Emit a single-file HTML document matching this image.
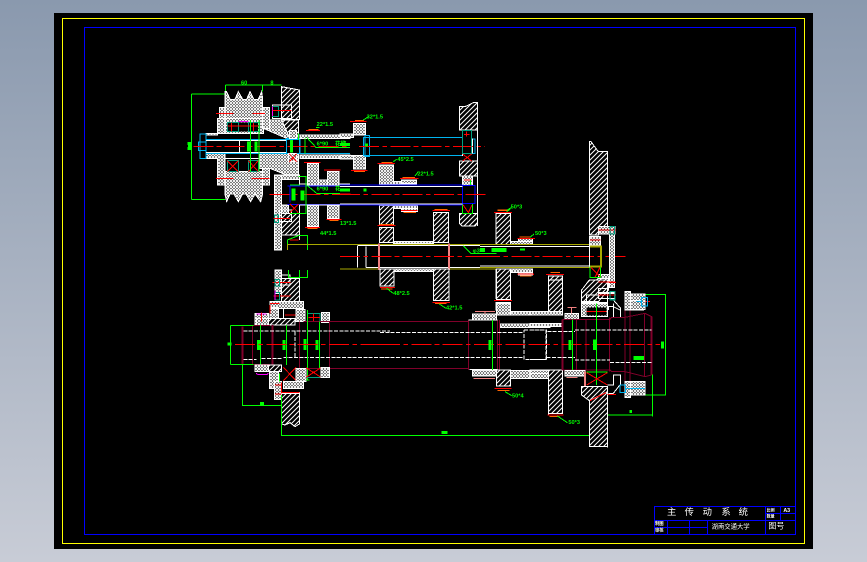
<!DOCTYPE html>
<html><head><meta charset="utf-8"><title>主传动系统</title>
<style>
html,body{margin:0;padding:0;width:867px;height:562px;overflow:hidden;background:linear-gradient(#8a99ae,#c8ccd6)}
svg{position:absolute;left:0;top:0;display:block}
text{font-family:"Liberation Sans","Noto Sans CJK SC",sans-serif}
.w{stroke:#fff;stroke-width:3;fill:none}
.d{stroke:#fff;stroke-width:3;fill:url(#dense)}
.h{stroke:#fff;stroke-width:3;fill:url(#diag)}
.r{stroke:#f00;stroke-width:3;fill:none}
.c{stroke:#f00;stroke-width:3;fill:none;stroke-dasharray:60 10 14 10}
.o{stroke:#f60;stroke-width:3;fill:none}
.g{stroke:#0f0;stroke-width:3;fill:none}
.t{stroke:#00b4f0;stroke-width:3;fill:none}
.b{stroke:#0000ff;stroke-width:3;fill:none}
.y{stroke:#a8a800;stroke-width:3;fill:none}
.m{stroke:#80002a;stroke-width:3;fill:none}
.mm{stroke:#80002a;stroke-width:6;fill:none}
.p{stroke:#f08080;stroke-width:6;fill:none}
.k{stroke:#f0f;stroke-width:3;fill:none}
.e{stroke:#00a080;stroke-width:3;fill:none}
.wd{stroke:#fff;stroke-width:3;fill:none;stroke-dasharray:12 4}
.l{fill:#0f0;font-size:17px;font-weight:bold}
</style></head><body>
<svg width="867" height="562" viewBox="0 0 867 562" xmlns="http://www.w3.org/2000/svg" shape-rendering="crispEdges">
<defs>
<pattern id="dense" width="9" height="9" patternUnits="userSpaceOnUse"><rect width="9" height="9" fill="#000" shape-rendering="auto"/><path d="M-3 3L3 -3M0 9L9 0M6 12L12 6M-3 6L3 12M0 0L9 9M6 -3L12 3" stroke="#fff" stroke-width="3" fill="none" shape-rendering="auto"/></pattern>
<pattern id="diag" width="15" height="15" patternUnits="userSpaceOnUse"><rect width="15" height="15" fill="#000" shape-rendering="auto"/><path d="M-3 3L3 -3M0 15L15 0M12 18L18 12" stroke="#fff" stroke-width="3" shape-rendering="auto"/></pattern>
</defs>
<rect x="54" y="13" width="759" height="536" fill="#000"/>
<rect x="62.5" y="18.5" width="742" height="525" fill="none" stroke="#ff0" stroke-width="1"/>
<rect x="84.5" y="27.5" width="711" height="507" fill="none" stroke="#00f" stroke-width="1"/>

<!-- Region A: pulley -->
<g transform="translate(180,70) scale(.33333)">
<path class="g" d="M35 72V388M35 72H135M35 388H135M137 45H305M137 45V65M248 45V65"/>
<path class="h" d="M305 50L358 60V148H305Z"/>
<path class="d" d="M135 65H140L150 88H165L175 65L188 88H200L210 65L222 88H235L245 65L248 88V145H135V88Z"/>
<path class="d" d="M135 305H248V372L242 395L225 372L212 395L198 372H188L175 395L162 372H150L140 395L135 372Z"/>
<path class="d" d="M112 145H135V190H78V195H112Z"/>
<path class="d" d="M78 250H135V345H112V265H78Z"/>
<path class="d" d="M135 145H250V190H135Z"/>
<rect x="142" y="158" width="92" height="26" fill="#000"/>
<path class="e" d="M142 158H175V184H142ZM205 158H238V184H205Z"/>
<path class="r" d="M155 158V184M220 158V184M142 168H238"/>
<path class="k" d="M175 155H205M175 300H205"/>
<rect x="135" y="265" width="113" height="40" fill="#000" stroke="#fff" stroke-width="3"/>
<path class="e" d="M142 272H175V305H142ZM205 272H235V305H205Z"/>
<path class="r" d="M142 272L175 305M175 272L142 305M205 272L235 305M235 272L205 305"/>
<path class="d" d="M118 112H135V145H118ZM248 112H268V175H248ZM248 285H268V345H248Z"/>
<path class="d" d="M268 150H355V205H320L250 175H268Z"/>
<path class="d" d="M240 250H355V315H320L270 295H240Z"/>
<path class="h" d="M305 150H355V195H325Z"/>
<path class="w" d="M278 105H335V145H278Z"/>
<path class="e" d="M278 110H296V140H278Z"/>
<path class="k" d="M277 110V138M325 250V275"/>
<path class="r" d="M278 122H335M108 130H160M218 130H255M108 325H160M215 325H268"/>
<rect x="78" y="205" width="282" height="45" fill="#000"/>
<path class="t" d="M60 192H78V265H60ZM55 216H78V242H55ZM78 208H360V250H78ZM320 205H358V250H320ZM355 195H380M355 205H510M355 250H510"/>
<path class="w" d="M78 212H318M78 247H318M360 198H510M360 255H510M360 265H510M160 212H178V248H160"/>
<path class="d" d="M360 195H510V205H360ZM360 255H510V266H360Z"/>
<path class="c" d="M40 229H510"/>
<path class="g" d="M212 150V305M237 150V305M375 205V250M355 190V210"/>
<path class="g" d="M205 215V245M228 215V245M335 210V248M22 220H34M22 235H34M28 220V235" style="stroke-width:9"/>
<path class="d" d="M328 182H350V205H328ZM325 250H350V275H325Z"/>
<path class="r" d="M328 252L350 275M350 252L328 275"/>
<path class="o" d="M385 178H415"/>
<path class="r" d="M378 182H420M372 278H422"/>
<path class="g" d="M380 202L408 232H510M408 172H418"/>
<text class="l" x="183" y="44">60</text><text class="l" x="271" y="44">8</text>
<text class="l" x="410" y="168">22*1.5</text><text class="l" x="410" y="227">6*90</text><text class="l" x="465" y="227">花键</text>
<!-- lower left -->
<path class="d" d="M283 315H305V540H283Z"/>
<path class="h" d="M305 430H358V495H305Z"/>
<path class="d" d="M305 315H358V328H305ZM305 405H325V430H305Z"/>
<path class="w" d="M358 315V510M298 420H335V455H298Z"/>
<path class="e" d="M283 435H296V458H283Z"/>
<path class="r" d="M280 445H330M330 510H355"/>
<rect x="322" y="345" width="190" height="60" fill="#000"/>
<path class="b" d="M322 348H510M322 403H510M330 350V398"/>
<path class="w" d="M358 342H510M358 405H510"/>
<path class="c" d="M268 373H510"/>
<path class="g" d="M355 320H378V430H330M330 345H360M380 345L410 370H510M322 540V510L355 497H382V540"/>
<path class="g" style="stroke-width:12" d="M340 355V392M367 362V392"/>
<path class="r" d="M330 402L355 428M355 402L330 428"/>
<path class="d" d="M382 280H415V345H382Z"/>
<path class="d" d="M382 405H415V470H382Z"/>
<path class="d" d="M442 305H477V345H442ZM415 330H442V345H415Z"/>
<path class="d" d="M442 405H477V445H442Z"/>
<path class="r" d="M375 472H420M432 300H482M440 448H485"/>
<path class="o" d="M382 476H412M448 451H475"/>
<text class="l" x="420" y="495">44*1.5</text><text class="l" x="480" y="465">13*1.5</text>
<text class="l" x="410" y="362">6*90</text><text class="l" x="465" y="362">花键</text>
<path class="y" d="M322 523H510M322 523V540"/>
</g>

<!-- Region B -->
<g transform="translate(340,90) scale(.33333)">
<path class="d" d="M40 100H77V135H40ZM40 197H77V237H40ZM0 132H40V142H0ZM0 197H40V207H0Z"/>
<path class="r" d="M30 95H80M33 241H82"/><path class="o" d="M45 91H72M42 244H75"/>
<path class="g" d="M70 90L85 80"/>
<text class="l" x="80" y="86">32*1.5</text>
<path class="t" d="M70 142H368V197H70ZM75 136H89V200H75ZM395 147H405V190H395Z"/>
<path class="w" d="M368 122V198M398 145V190"/>
<path class="c" d="M57 169H435"/>
<path class="g" style="stroke-width:9" d="M0 163H30M80 160V170"/>
<path class="h" d="M358 50L375 50L400 38H412V120H358Z"/>
<path class="h" d="M358 213H412V258H358Z"/>
<path class="h" d="M358 370H412V400L405 408H366L358 400Z"/>
<path class="w" d="M412 38V408"/>
<path class="e" d="M368 122H395V190H368Z"/>
<path class="r" d="M380 125V140M372 133H388M368 192L395 213M395 192L368 213"/>
<path class="d" d="M368 258H398V285H368Z"/>
<path class="r" d="M372 270H395"/>
<path class="g" d="M368 342V370H398V342M392 270V285"/>
<path class="r" d="M370 345L385 368L396 345"/>
<!-- gear middle -->
<path class="d" d="M118 225H160V283H118Z"/>
<path class="d" d="M160 275H230V283H160Z"/>
<path class="d" d="M185 270H230V280H185Z"/>
<path class="h" d="M118 347H160V405H118Z"/>
<path class="h" d="M118 412H160V458H118Z"/>
<path class="d" d="M160 347H232V356H160ZM185 356H232V364H185Z"/>
<path class="h" d="M280 367H325V458H280Z"/>
<path class="d" d="M160 455H280V461H160Z"/>
<path class="h" d="M470 373H510V461H470Z"/>
<path class="r" d="M113 221H165M180 266H235M183 362H233M277 362H330M112 407H166M462 367H510"/>
<path class="o" d="M125 217H158M188 262H225M190 367H228M283 358H322M118 403H160M472 360H505"/>
<path class="g" d="M160 215L170 208M225 258L235 245M500 365L510 358"/>
<text class="l" x="172" y="213">45*2.5</text><text class="l" x="232" y="256">22*1.5</text>
<rect x="0" y="284" width="368" height="62" fill="#000"/>
<path class="b" d="M0 285H368M0 345H368M368 287H405V340H368Z"/>
<path class="w" d="M0 289H368M0 342H368"/>
<path class="c" d="M0 313H445"/>
<path class="g" style="stroke-width:9" d="M0 300H30M75 295V305"/><path class="r" d="M0 312H32"/>
<!-- yellow shaft -->
<path class="y" d="M0 463H510M0 537H510"/>
<path class="w" d="M52 468V532M78 470V532M52 467H510M78 532H510"/>
<path class="p" d="M117 460V540M327 460V540"/>
<path class="c" d="M0 499H510"/>
<path class="g" d="M370 468L393 490H510"/>
<text class="l" x="398" y="488">φ30</text><text class="l" x="452" y="488">花键</text>
</g>

<!-- Region C -->
<g transform="translate(480,130) scale(.33333)">
<path class="h" d="M48 250H92V345H48Z"/>
<path class="d" d="M92 335H158V345H92ZM115 325H158V335H115Z"/>
<path class="r" d="M42 247H96M112 325H165"/><path class="o" d="M52 242H82M118 321H150"/>
<path class="g" d="M82 240L95 232M150 322L162 312"/>
<text class="l" x="92" y="236">50*3</text><text class="l" x="165" y="315">50*3</text>
<rect x="0" y="344" width="330" height="70" fill="#000"/>
<path class="y" d="M0 343H330M0 413H330"/>
<path class="w" d="M0 349H330M0 408H330"/>
<path class="g" d="M0 370H50"/><path class="g" style="stroke-width:12" d="M0 360H15M35 360H80"/>
<path class="g" style="stroke-width:6" d="M120 358H135"/>
<path class="c" d="M0 379H440"/>
<path class="h" d="M48 418H92V505H48Z"/>
<path class="h" d="M48 517H92V540H48Z"/>
<path class="d" d="M92 418H158V425H92ZM115 425H158V432H115Z"/>
<path class="h" d="M205 438H248V540H205Z"/>
<path class="r" d="M112 434H162M42 511H96M198 433H252"/>
<path class="o" d="M120 438H155M212 428H240M50 506H90"/>
<path class="h" d="M328 35H333L355 65H382V290H355V315H328Z"/>
<path class="d" d="M355 290H405V312H355Z"/>
<path class="d" d="M388 312H404V472H388Z"/>
<path class="d" d="M355 433H388V445H355Z"/>
<path class="d" d="M328 320H362V345H328Z"/>
<path class="r" d="M330 330H362M355 300H408M355 457H408M355 495H405"/>
<path class="e" d="M390 290H404V312H390ZM390 485H404V508H390Z"/>
<path class="y" style="stroke-width:6" d="M330 350H363V410H330"/>
<path class="w" d="M328 345V412"/>
<path class="g" d="M330 410V442H362V410"/>
<path class="r" d="M332 412L360 440M360 412L345 442"/>
<path class="h" d="M305 490L330 470L355 445H385V480L355 515H305Z"/>
<path class="w" d="M355 488H405V505H355ZM355 515V530H385V540M385 530H400L420 540"/>
<path class="d" d="M308 518H380V535H308Z"/>
<path class="p" d="M315 522V540"/>
<path class="g" d="M350 520V540"/>
<path class="d" d="M436 485H452V540H436ZM452 492H490V540H452Z"/>
<path class="g" d="M490 493H510"/>
<path class="r" d="M452 515H510"/>
<path class="t" d="M486 502H502V528H486Z"/>
</g>

<!-- Region D -->
<g transform="translate(220,270) scale(.33333)">
<path class="d" d="M165 0H185V70H165Z"/>
<path class="h" d="M185 25H238V95H185Z"/>
<path class="w" d="M185 15H210V45H185Z"/>
<path class="r" d="M158 37H212M160 78H212"/>
<path class="e" d="M165 28H178V48H165ZM165 68H178V90H165Z"/>
<path class="k" d="M165 62V90"/>
<path class="g" d="M205 0V22H263V0M238 0V22"/>
<path class="d" d="M150 95H250V115H150ZM150 112H175V145H150Z"/>
<path class="w" d="M190 115H230V150H190Z"/>
<path class="r" d="M195 135H228M150 100H178M150 105V130"/>
<path class="d" d="M228 118H255V155H228Z"/>
<path class="d" d="M305 128H328V157H305Z"/>
<path class="e" d="M262 130H300V155H262Z"/>
<path class="r" d="M265 142H300M280 130V155"/>
<path class="d" d="M105 130H145V165H105Z"/>
<path class="d" d="M110 145H225V165H110Z"/>
<path class="h" d="M145 145H225V165H145Z"/>
<path class="k" d="M110 132H140"/>
<path class="r" d="M125 128V155"/>
<path class="mm" d="M68 170V282M158 165V285"/>
<path class="m" d="M68 166H150M68 284H150M98 165V285M238 155V295M328 155V295M250 155H510M250 295H510"/>
<path class="wd" d="M70 183H510M70 268H110M125 265H185M190 262H510M225 185V262"/>
<path class="g" d="M32 167V283M32 167H100M32 283H100M122 165V285M199 165V285M262 120V330M298 155V295"/>
<path class="g" style="stroke-width:9" d="M115 210V240M192 210V240M255 207V240M291 210V240M22 222H34"/>
<path class="c" d="M45 223H510"/>
<path class="d" d="M105 285H185V305H105Z"/>
<path class="h" d="M145 285H185V305H145Z"/>
<path class="k" d="M108 310L115 314H140L145 310M325 308V315"/>
<path class="d" d="M148 305H175V355H148Z"/>
<path class="d" d="M190 335H250V355H190Z"/>
<path class="d" d="M163 335H185V388H163Z"/>
<path class="h" d="M185 370H238V462L225 470L210 458L195 465L185 462Z"/>
<path class="w" d="M185 367H238V462"/>
<path class="r" d="M185 338V367H238M165 345H185M165 372H185M190 292L228 332M228 292L190 332"/>
<path class="d" d="M228 295H258V335H228Z"/>
<path class="e" d="M258 322H303"/>
<path class="r" d="M258 293L303 322M303 293L258 322"/>
<path class="d" d="M303 292H328V322H303Z"/>
<path class="g" d="M68 283V407H183M185 375V497H510M178 310V335M258 330H268"/>
<path class="g" style="stroke-width:9" d="M120 400H132"/>
</g>

<!-- Region E -->
<g transform="translate(380,250) scale(.33333)">
<path class="h" d="M0 57H42V108H0Z"/>
<path class="d" d="M42 57H160V65H42Z"/>
<path class="h" d="M160 57H207V152H160Z"/>
<path class="h" d="M350 57H392V148H350Z"/>
<path class="d" d="M392 57H458V68H392ZM415 68H458V75H415Z"/>
<path class="r" d="M0 112H45M157 157H210M343 152H395M412 72H462M343 416H395"/>
<path class="o" d="M3 117H38M165 160H200M420 78H455M352 421H388"/>
<path class="g" d="M20 115L40 130M178 162L198 175M375 425L395 437"/>
<text class="l" x="40" y="135">48*2.5</text><text class="l" x="198" y="178">42*1.5</text><text class="l" x="396" y="442">50*4</text>
<path class="d" d="M350 160H392V195H350Z"/>
<path class="d" d="M392 185H510V195H392ZM360 222H510V233H360Z"/>
<path class="w" d="M505 78V183M505 388V495"/>
<path class="m" d="M0 214H265M0 355H265M265 210V360M352 210V360M358 210V360"/>
<path class="wd" d="M0 247H432M0 322H432M432 240H500V328H432V240M505 245H510"/>
<path class="c" d="M0 283H510"/>
<path class="d" d="M277 192H350V210H277ZM277 360H350V378H277Z"/>
<path class="p" d="M315 185V192" style="stroke-width:3"/>
<path class="p" d="M285 185H345M280 385H345" style="stroke-width:3"/>
<path class="w" d="M265 210H352M268 359H352"/>
<path class="h" d="M350 360H392V408H350Z"/>
<path class="d" d="M392 362H510V385H392Z"/>
<path class="g" d="M337 210V360M0 556H510"/>
<path class="g" style="stroke-width:9" d="M330 270V300M185 548H203"/>
</g>

<!-- Region F -->
<g transform="translate(530,280) scale(.33333)">
<path class="h" d="M55 0H98V95H55Z"/>
<path class="d" d="M0 95H98V105H0ZM0 130H98V140H0Z"/>
<path class="d" d="M0 270H98V280H0ZM0 280H55V295H0Z"/>
<path class="h" d="M55 270H98V400H55Z"/>
<path class="r" d="M52 405H100"/><path class="o" d="M58 410H88"/>
<path class="g" d="M82 408L112 428"/>
<text class="l" x="115" y="432">50*3</text>
<path class="d" d="M105 100H145V118H105ZM105 274H165V288H105Z"/>
<path class="p" d="M110 292H142" style="stroke-width:3"/>
<path class="p" d="M112 82H140M125 82V100" style="stroke-width:3"/>
<path class="h" d="M178 0H232V25H205V45H170V65H155V30Z"/>
<path class="d" d="M155 70H232V110H155Z"/>
<rect x="170" y="82" width="60" height="25" fill="#000"/>
<path class="w" d="M155 30V70M232 25V95M250 60L272 85V112H250V70M205 40H255V55H205"/>
<path class="r" d="M205 6H255M205 45H258M170 95H230"/>
<path class="e" d="M240 35H255V60H240Z"/>
<path class="mm" d="M97 118V270M365 110V285"/>
<path class="m" d="M97 118H240L245 112H285L345 100L365 110M97 270H240L245 275H285L345 290L365 285M140 118V270M168 118V270M238 112V275M285 85V305M300 85V305M343 100V290"/>
<path class="wd" d="M0 150H48V238H0M52 155H135M135 150H365M50 232H135M135 240H240M240 247H365"/>
<path class="c" d="M0 193H390"/>
<path class="g" d="M127 118V270M199 70V315M345 44H407V345H345M232 405H367V283M367 405V410M0 466H232M170 276H232"/>
<path class="g" style="stroke-width:9" d="M120 180V210M193 178V210M398 185V205M298 395H306"/>
<path class="g" style="stroke-width:12" d="M310 234H342"/>
<path class="d" d="M105 272H165V288H105Z"/>
<path class="r" d="M170 278L232 315M232 278L170 315"/>
<path class="p" d="M165 275V318" style="stroke-width:6"/>
<path class="h" d="M155 320H232V335L178 362L155 345Z"/>
<path class="h" d="M178 362L232 335V500H178Z"/>
<path class="w" d="M232 315H250V285H272V312L250 340H235M232 335V502M178 362V500H232"/>
<path class="r" d="M180 362L228 338M232 343H258"/>
<path class="d" d="M285 35H302V90H285ZM302 42H345V88H302Z"/>
<path class="w" d="M302 62H330"/>
<path class="t" d="M335 52H352V78H335ZM320 65H338"/>
<path class="d" d="M285 305H302V352H285ZM302 305H345V345H302Z"/>
<path class="w" d="M302 325H345"/>
<path class="r" d="M285 325H345"/>
<path class="t" d="M270 315H287V338H270ZM287 325H345"/>
</g>

<!-- Title block -->
<g transform="translate(640,495) scale(.33333)">
<path class="b" style="fill:#000" d="M43 34H466V118H43Z"/>
<path class="b" d="M43 76H466M377 34V118M422 34V76M377 55H466M83 76V118M148 76V118M202 76V118M43 97H202"/>
<g fill="#fff" font-size="28">
<text x="81" y="60">主</text><text x="134" y="60">传</text><text x="188" y="60">动</text><text x="244" y="60">系</text><text x="296" y="60">统</text>
<text x="215" y="100" font-size="19">湖南交通大学</text>
<text x="385" y="101" font-size="24">图号</text>
<text x="380" y="50" font-size="12" font-weight="bold">比例</text>
<text x="380" y="68" font-size="12" font-weight="bold">数量</text>
<text x="430" y="51" font-size="16" font-weight="bold">A3</text>
<text x="45" y="90" font-size="13" font-weight="bold">制图</text>
<text x="45" y="110" font-size="13" font-weight="bold">审核</text>
</g>
</g>
</svg>
</body></html>
